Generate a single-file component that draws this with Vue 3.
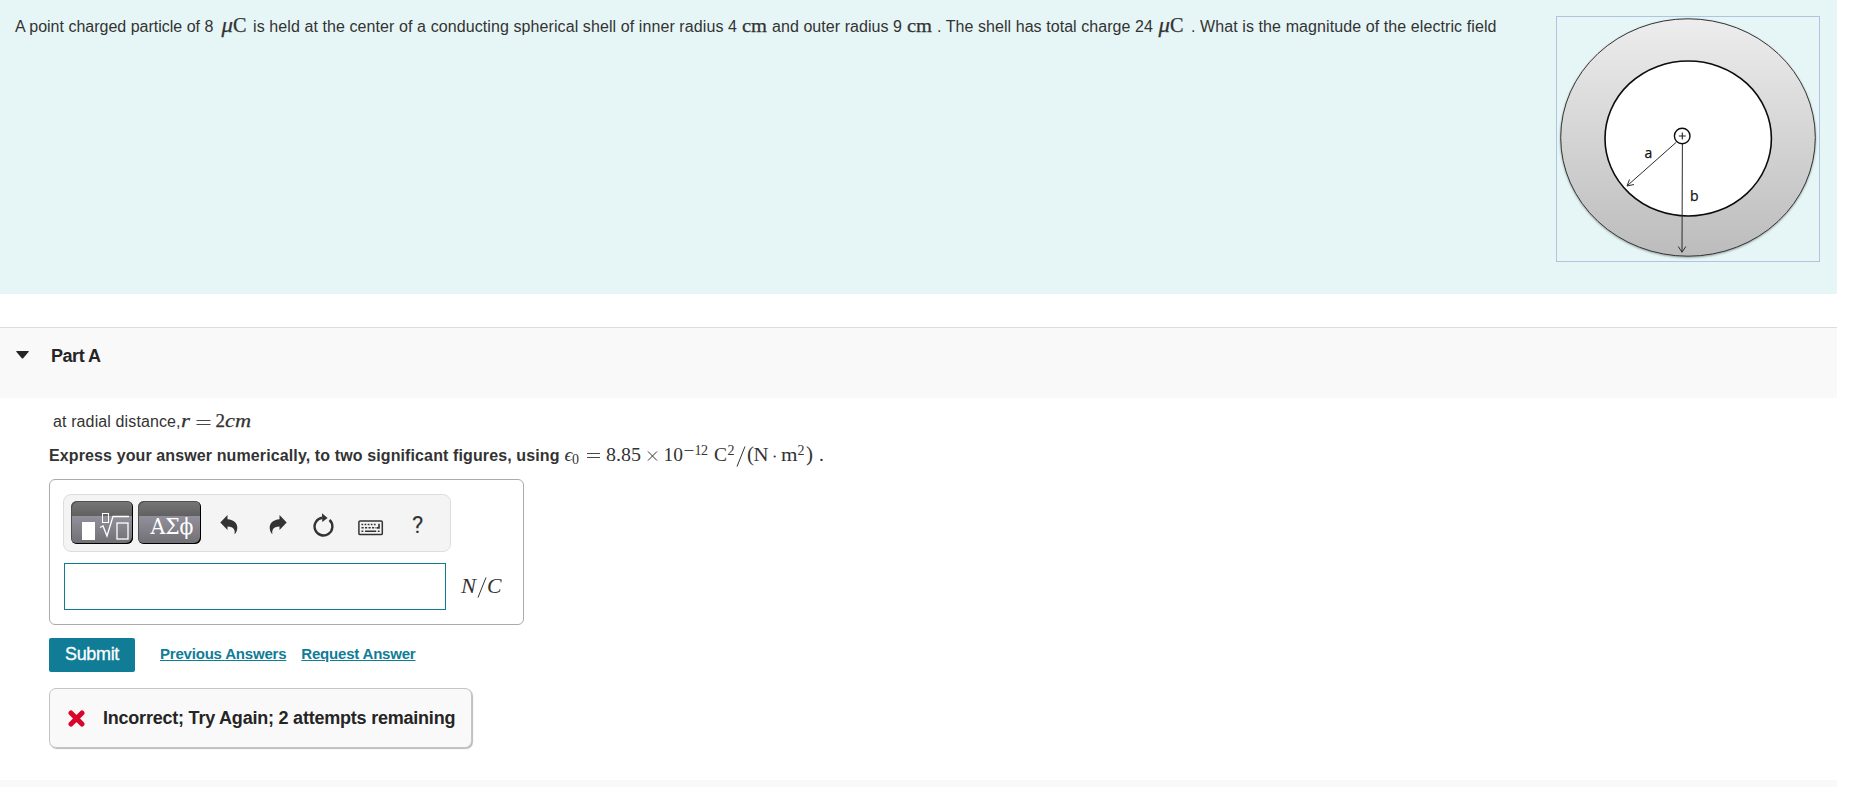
<script setup>
import { ref } from 'vue'

const answer = ref('')
const open = ref(true)
const attempts = ref(2)
</script>

<template>
  <div class="page">
    <section class="intro">
      <p class="statement">
        <span class="run run-1">A point charged particle of 8</span>
        <svg class="math strong" width="38" height="26">
          <text x="6.5" y="19" class="it" font-size="20" textLength="11.5" lengthAdjust="spacingAndGlyphs">μ</text>
          <text x="18" y="19" font-size="20" textLength="13.5" lengthAdjust="spacingAndGlyphs">C</text>
        </svg>
        <span class="run run-2">is held at the center of a conducting spherical shell of inner radius 4</span>
        <svg class="math strong" width="35" height="26">
          <text x="5" y="19" font-size="19" textLength="25" lengthAdjust="spacingAndGlyphs">cm</text>
        </svg>
        <span class="run run-3">and outer radius 9</span>
        <svg class="math strong" width="35" height="26">
          <text x="5" y="19" font-size="19" textLength="25" lengthAdjust="spacingAndGlyphs">cm</text>
        </svg>
        <span class="run run-4">. The shell has total charge 24</span>
        <svg class="math strong" width="38" height="26">
          <text x="5.5" y="19" class="it" font-size="20" textLength="11.5" lengthAdjust="spacingAndGlyphs">μ</text>
          <text x="17" y="19" font-size="20" textLength="13.5" lengthAdjust="spacingAndGlyphs">C</text>
        </svg>
        <span class="run run-5">. What is the magnitude of the electric field</span>
      </p>

      <svg class="figure" width="264" height="246" viewBox="1556 16 264 246">
        <defs>
          <linearGradient id="shell" x1="0" y1="0" x2="0" y2="1">
            <stop offset="0" stop-color="#ededed" />
            <stop offset="1" stop-color="#bcbcbc" />
          </linearGradient>
          <filter id="shade" x="-5%" y="-5%" width="110%" height="112%">
            <feDropShadow dx="0" dy="1" stdDeviation="1" flood-opacity="0.35" />
          </filter>
        </defs>
        <rect x="1556.5" y="16.5" width="263" height="245" fill="none" stroke="#b0c4de" />
        <ellipse cx="1688" cy="137.5" rx="127.3" ry="118.7" fill="url(#shell)" stroke="#333" filter="url(#shade)" />
        <ellipse cx="1688.2" cy="138.5" rx="83.2" ry="77.5" fill="#fff" stroke="#0c0c0c" stroke-width="1.6" />
        <g fill="none" stroke="#2c2c2c" stroke-width="1">
          <path d="M1676 142.5 L1627.5 185.5 M1629.5 179.5 L1627 186 L1634 184.5" />
          <path d="M1682.4 144 L1682 252 M1678.3 246.5 L1682 252.3 L1685.8 246.5" />
        </g>
        <circle cx="1682.2" cy="136" r="7.8" fill="#fff" stroke="#0c0c0c" stroke-width="1.4" />
        <path d="M1678.8 136 H1685.8 M1682.3 132.5 V139.5" stroke="#222" stroke-width="1.1" />
        <text x="1644.6" y="157.6" class="label">a</text>
        <text x="1690" y="201" class="label">b</text>
      </svg>
    </section>

    <header class="part-header" @click="open = !open">
      <svg class="caret" width="13" height="8" viewBox="0 0 13 8">
        <path d="M0.8 0 H12.2 Q13.3 0 12.5 1 L7.4 7 Q6.5 8 5.6 7 L0.5 1 Q-0.3 0 0.8 0 Z" fill="#252525" />
      </svg>
      <h2>Part A</h2>
    </header>

    <main v-if="open" class="part-body">
      <p class="question">
        <span class="run">at radial distance,</span>
        <svg class="math strong" width="72" height="26">
          <text x="0" y="19" class="it" font-size="19" textLength="9" lengthAdjust="spacingAndGlyphs">r</text>
          <path d="M15.5 12.5 H29.5 M15.5 16.5 H29.5" stroke="#333" stroke-width="0.9" />
          <text x="34.5" y="19" font-size="19">2</text>
          <text x="44" y="19" class="it" font-size="19" textLength="26" lengthAdjust="spacingAndGlyphs">cm</text>
        </svg>
      </p>

      <p class="instructions">
        <span class="run">Express your answer numerically, to two significant figures, using</span>
        <svg class="math" width="264" height="30" viewBox="564 440 264 30">
          <text x="564.5" y="461" class="it" font-size="19" textLength="8" lengthAdjust="spacingAndGlyphs">ϵ</text>
          <text x="572" y="464" font-size="14">0</text>
          <path d="M587 453.5 H600 M587 457.5 H600" stroke="#333" stroke-width="0.9" />
          <text x="606" y="461" font-size="19.5" textLength="35" lengthAdjust="spacingAndGlyphs">8.85</text>
          <path d="M648 451.5 L657 460.5 M657 451.5 L648 460.5" stroke="#333" stroke-width="1" />
          <text x="663.5" y="461" font-size="19.5" textLength="19.5" lengthAdjust="spacingAndGlyphs">10</text>
          <path d="M684.5 450.5 H693.5" stroke="#333" stroke-width="0.9" />
          <text x="694.5" y="454.5" font-size="14" textLength="13.5">12</text>
          <text x="714" y="461" font-size="19.5" textLength="13" lengthAdjust="spacingAndGlyphs">C</text>
          <text x="727.5" y="454.5" font-size="14">2</text>
          <path d="M737 466.5 L745 446.5" stroke="#333" stroke-width="1" />
          <text x="747" y="461" font-size="21">(</text>
          <text x="753.5" y="461" font-size="19.5" textLength="15" lengthAdjust="spacingAndGlyphs">N</text>
          <circle cx="774.7" cy="456.5" r="1.1" fill="#333" />
          <text x="781" y="461" font-size="19.5" textLength="16.5" lengthAdjust="spacingAndGlyphs">m</text>
          <text x="797.5" y="454.5" font-size="14">2</text>
          <text x="806" y="461" font-size="21">)</text>
          <text x="819" y="461" font-size="19.5">.</text>
        </svg>
      </p>

      <div class="answer-box">
        <div class="toolbar">
          <button class="tool-dark templates" aria-label="Templates">
            <svg width="62" height="43" viewBox="0 0 62 43">
              <rect x="11" y="21" width="13" height="18" fill="#fff" />
              <g fill="none" stroke="#fff">
                <rect x="31.5" y="12.5" width="6" height="9" />
                <path d="M29 26.5 L32 25 L36 35 L42 15.5 H58" stroke-width="1.3" />
                <rect x="46" y="22" width="11" height="16" stroke-width="1.3" />
              </g>
            </svg>
          </button>
          <button class="tool-dark symbols" aria-label="Symbols">
            <svg width="63" height="43" viewBox="0 0 63 43">
              <text x="12.5" y="32.5" class="greek" textLength="43" lengthAdjust="spacingAndGlyphs">ΑΣϕ</text>
            </svg>
          </button>
          <button class="tool undo" aria-label="Undo">
            <svg width="18" height="20" viewBox="0 0 18 20">
              <path d="M0.3 7.5 L7.5 0 V4.3 C14 4.8 17.5 8.5 17.3 13 C17.2 15.8 16 18 14.5 19.3 C15.3 15.5 14.3 11.7 7.5 11.5 V15 Z" fill="#333" />
            </svg>
          </button>
          <button class="tool redo" aria-label="Redo">
            <svg width="18" height="20" viewBox="0 0 18 20">
              <path d="M17.7 7.5 L10.5 0 V4.3 C4 4.8 0.5 8.5 0.7 13 C0.8 15.8 2 18 3.5 19.3 C2.7 15.5 3.7 11.7 10.5 11.5 V15 Z" fill="#333" />
            </svg>
          </button>
          <button class="tool reset" aria-label="Reset">
            <svg width="22" height="24" viewBox="0 0 22 24">
              <path d="M17.5 7 A8.9 8.9 0 1 1 10.5 4.7" fill="none" stroke="#333" stroke-width="2.4" />
              <path d="M10 0.3 L15.6 4.9 L10.3 9 Z" fill="#333" />
            </svg>
          </button>
          <button class="tool keyboard" aria-label="Keyboard shortcuts">
            <svg width="26" height="16" viewBox="0 0 26 16">
              <rect x="0.9" y="0.9" width="23.4" height="13.7" rx="1.2" fill="none" stroke="#333" stroke-width="1.5" />
              <g stroke="#333" stroke-width="1.6" fill="none">
                <path d="M3.5 4.5 H19" stroke-dasharray="1.7 1.4" />
                <path d="M3.5 7.7 H18" stroke-dasharray="2.2 1.3" />
                <path d="M3.5 11.3 H5.3 M7 11.3 H18.2 M19.8 11.3 H21.6" />
                <path d="M21 3.7 V7.9 H18.5" />
              </g>
            </svg>
          </button>
          <button class="tool help" aria-label="Help">?</button>
        </div>
        <div class="entry">
          <input v-model="answer" type="text" aria-label="Answer" />
          <svg class="math unit" width="44" height="28">
            <text x="1" y="19.5" class="it" font-size="21" textLength="15" lengthAdjust="spacingAndGlyphs">N</text>
            <path d="M18 24.5 L26 4.5" stroke="#333" stroke-width="1" />
            <text x="27" y="19.5" class="it" font-size="21" textLength="14.5" lengthAdjust="spacingAndGlyphs">C</text>
          </svg>
        </div>
      </div>

      <div class="actions">
        <button class="submit">Submit</button>
        <a href="#" class="previous" @click.prevent>Previous Answers</a>
        <a href="#" @click.prevent>Request Answer</a>
      </div>

      <div class="feedback">
        <svg width="17" height="17" viewBox="0 0 17 17">
          <path d="M3 3 L14 14 M14 3 L3 14" stroke="#d90429" stroke-width="5" stroke-linecap="round" />
        </svg>
        <span>Incorrect; Try Again; {{ attempts }} attempts remaining</span>
      </div>
    </main>

    <footer class="next-part"></footer>
  </div>
</template>

<style>
body {
  background: #fff;
  overflow: hidden;
}
</style>

<style scoped>
.page {
  width: 1837px;
  height: 787px;
  display: flex;
  flex-direction: column;
  overflow: hidden;
  font-family: "Liberation Sans", Arial, sans-serif;
  font-size: 16px;
  color: #333;
}

p,
h2 {
  margin: 0;
}

button {
  border: 0;
  padding: 0;
  cursor: pointer;
  font-family: inherit;
}

svg {
  display: block;
  flex: none;
}

.run {
  flex: none;
  padding-top: 2px;
  white-space: nowrap;
}

.math {
  font-family: "Liberation Serif", "Times New Roman", serif;
  font-weight: normal;
  fill: #333;
}

.strong text {
  stroke: #333;
  stroke-width: 0.25px;
}

.it {
  font-style: italic;
}

.intro {
  height: 294px;
  flex: none;
  box-sizing: border-box;
  padding: 12px 17px 0 15px;
  display: flex;
  justify-content: space-between;
  background: #e6f6f6;
}

.statement {
  height: 28px;
  display: flex;
  align-items: center;
  line-height: 28px;
}

.run-1 {
  width: 200px;
}

.run-2 {
  width: 484px;
  letter-spacing: 0.09px;
}

.run-3 {
  width: 130px;
  letter-spacing: 0.06px;
}

.run-4 {
  width: 216px;
  letter-spacing: 0.06px;
}

.run-5 {
  letter-spacing: 0.09px;
}

.figure {
  margin-top: 4px;
}

.label {
  font-family: "Open Sans", sans-serif;
  font-size: 14px;
  fill: #111;
  stroke: #111;
  stroke-width: 0.25px;
}

.part-header {
  height: 71px;
  flex: none;
  box-sizing: border-box;
  margin-top: 33px;
  padding: 17px 0 0 16px;
  display: flex;
  align-items: flex-start;
  gap: 22px;
  border-top: 1px solid #ddd;
  background: #f9f9f9;
}

.caret {
  margin-top: 6px;
}

.part-header h2 {
  font-size: 18px;
  line-height: 22px;
  letter-spacing: -0.45px;
  color: #252525;
}

.part-body {
  height: 382px;
  flex: none;
  box-sizing: border-box;
  padding: 10px 0 0 49px;
}

.question {
  height: 26px;
  padding-left: 4px;
  display: flex;
  align-items: center;
}

.question .run {
  letter-spacing: 0.12px;
}

.instructions {
  height: 30px;
  margin-top: 6px;
  display: flex;
  align-items: center;
  font-weight: bold;
}

.instructions .run {
  width: 515px;
  letter-spacing: 0.115px;
}

.answer-box {
  width: 475px;
  height: 146px;
  box-sizing: border-box;
  margin-top: 9px;
  padding: 14px 0 0 13px;
  border: 1px solid #aaa;
  border-radius: 6px;
}

.toolbar {
  width: 388px;
  height: 58px;
  box-sizing: border-box;
  padding-left: 7px;
  display: flex;
  align-items: center;
  border: 1px solid #ddd;
  border-radius: 8px;
  background: #f4f4f4;
}

.tool-dark {
  height: 43px;
  margin-top: -1px;
  overflow: hidden;
  box-sizing: border-box;
  border-radius: 6px;
  background: linear-gradient(#777 0, #606060 15px, #92909b 15px, #706f74 100%);
  box-shadow: inset -1px -1px 0 #000, inset 1px 1px 0 #505050;
}

.templates {
  width: 62px;
  margin-right: 5px;
}

.symbols {
  width: 63px;
}

.greek {
  font-family: "DejaVu Serif", serif;
  font-size: 21.5px;
  fill: #fff;
}

.tool {
  background: none;
  color: #333;
}

.undo {
  margin: 3px 0 0 19px;
}

.redo {
  margin: 3px 0 0 31px;
}

.reset {
  margin: 4px 0 0 25px;
}

.keyboard {
  margin: 10px 0 0 24px;
}

.help {
  margin: 3px 0 0 28px;
  font-family: Roboto, sans-serif;
  font-size: 24px;
}

.entry {
  margin-top: 11px;
  display: flex;
  align-items: center;
}

.entry input {
  width: 382px;
  height: 47px;
  box-sizing: border-box;
  border: 1px solid #107c96;
  outline: none;
  font-size: 18px;
  margin-left: 1px;
}

.unit {
  margin-left: 14px;
}

.actions {
  height: 34px;
  margin-top: 13px;
  display: flex;
  align-items: center;
}

.submit {
  width: 86px;
  height: 34px;
  padding-bottom: 2px;
  border-radius: 2px;
  background: #107c96;
  color: #fff;
  font-size: 18px;
  letter-spacing: -0.35px;
  -webkit-text-stroke: 0.3px #fff;
}

.actions a {
  color: #107c96;
  font-size: 15px;
  font-weight: bold;
  line-height: 18px;
  letter-spacing: -0.2px;
  margin-top: -2px;
}

.previous {
  margin: 0 15px 0 25px;
}

.feedback {
  width: 423px;
  height: 60px;
  box-sizing: border-box;
  margin-top: 16px;
  padding: 1px 0 0 18px;
  display: flex;
  align-items: center;
  gap: 18px;
  border: 1px solid #c4c4c4;
  border-radius: 7px;
  background: #f9f9f9;
  box-shadow: 1px 1px 1px #bbb;
  color: #252525;
  font-size: 18px;
  font-weight: bold;
  letter-spacing: -0.22px;
  white-space: nowrap;
}

.next-part {
  height: 7px;
  flex: none;
  background: #f9f9f9;
}
</style>
